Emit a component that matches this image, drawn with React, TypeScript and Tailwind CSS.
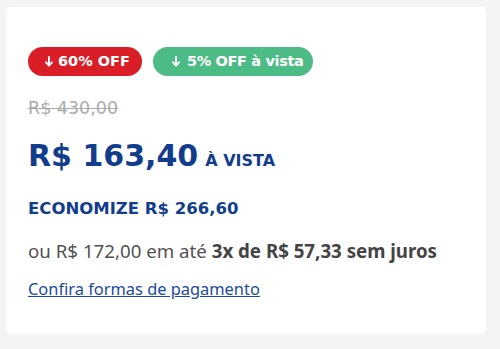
import React from "react";

const Arrow = () => (
  <svg width="8" height="11" viewBox="0 0 8 11" fill="none" className="shrink-0">
    <path d="M4 1v8.2M1 6.3l3 3.2 3-3.2" stroke="white" strokeWidth="1.9" strokeLinecap="round" strokeLinejoin="round" />
  </svg>
);

export default function App() {
  return (
    <div className="w-[500px] h-[349px] bg-[#f4f4f4] pt-[7px] pl-[6px]">
      <div className="w-[480px] h-[327px] bg-white rounded-[5px] pl-[22px] pt-[40px] flex flex-col">
        <div className="flex gap-[11px]">
          <span className="h-[29px] pl-[17px] pr-[12px] rounded-full bg-[#d91e27] text-white flex items-center gap-[5px] text-[14.5px] font-bold font-['DejaVu_Sans',sans-serif]">
            <Arrow />60% OFF
          </span>
          <span className="h-[29px] pl-[19px] pr-[10px] rounded-full bg-[#4dbb86] text-white flex items-center gap-[7px] text-[14.5px] font-bold font-['DejaVu_Sans',sans-serif] tracking-[-0.35px]">
            <Arrow />5% OFF à vista
          </span>
        </div>
        <div className="mt-[21px] text-[17.5px] leading-[22px] text-[#ababab] line-through font-['DejaVu_Sans',sans-serif]">R$ 430,00</div>
        <div className="mt-[17px] h-[40px] flex items-baseline gap-[7px] text-[#123d8d] font-['DejaVu_Sans',sans-serif] font-bold">
          <span className="text-[30px] leading-[40px]">R$ 163,40</span>
          <span className="text-[16px]">À VISTA</span>
        </div>
        <div className="mt-[22px] text-[16.5px] leading-[22px] font-bold text-[#123d8d] font-['DejaVu_Sans',sans-serif]">ECONOMIZE R$ 266,60</div>
        <div className="mt-[18px] text-[18.7px] leading-[26px] text-[#525252] font-['Noto_Sans',sans-serif]">
          ou R$ 172,00 em até <span className="font-bold text-[#444]">3x de R$ 57,33 sem juros</span>
        </div>
        <a className="mt-[14px] text-[16.4px] leading-[22px] text-[#1b4a9c] underline font-['Noto_Sans',sans-serif] w-fit">Confira formas de pagamento</a>
      </div>
    </div>
  );
}
